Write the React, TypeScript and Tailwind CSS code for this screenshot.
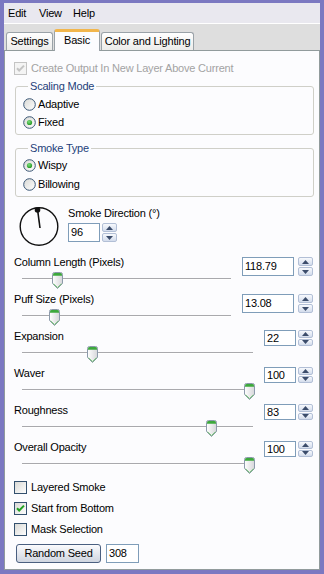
import React from 'react';

const font = { fontFamily: '"Liberation Sans", Arial, sans-serif' };

interface SliderRow {
    label: string;
    value: string;
    wide?: boolean;
    thumb: string;
}

const sliders: SliderRow[] = [
    { label: 'Column Length (Pixels)', value: '118.79', wide: true, thumb: 'left-[30px]' },
    { label: 'Puff Size (Pixels)', value: '13.08', wide: true, thumb: 'left-[27px]' },
    { label: 'Expansion', value: '22', thumb: 'left-[65px]' },
    { label: 'Waver', value: '100', thumb: 'left-[222px]' },
    { label: 'Roughness', value: '83', thumb: 'left-[184px]' },
    { label: 'Overall Opacity', value: '100', thumb: 'left-[222px]' },
];

const CheckBox: React.FC<{ checked?: boolean; disabled?: boolean }> = ({ checked, disabled }) => (
    <svg width="13" height="13" viewBox="0 0 13 13" className="shrink-0">
        <defs>
            <linearGradient id="cbg" x1="0" y1="0" x2="1" y2="1">
                <stop offset="0" stopColor="#d8d8d4" />
                <stop offset="1" stopColor="#ffffff" />
            </linearGradient>
        </defs>
        <rect x="0.5" y="0.5" width="12" height="12" fill={disabled ? '#f4f4f4' : 'url(#cbg)'} stroke={disabled ? '#c4c4c4' : '#33506e'} />
        {checked && (
            <path d="M3 6.2 L5.2 8.5 L10 3.6" fill="none" stroke={disabled ? '#c4c4c4' : '#21a121'} strokeWidth="2" />
        )}
    </svg>
);

const Radio: React.FC<{ checked?: boolean }> = ({ checked }) => (
    <svg width="13" height="13" viewBox="0 0 13 13" className="shrink-0">
        <defs>
            <linearGradient id="rbg" x1="0" y1="0" x2="1" y2="1">
                <stop offset="0" stopColor="#d8d8d4" />
                <stop offset="1" stopColor="#ffffff" />
            </linearGradient>
            <radialGradient id="rdot" cx="0.4" cy="0.35" r="0.7">
                <stop offset="0" stopColor="#7be07b" />
                <stop offset="1" stopColor="#1f921f" />
            </radialGradient>
        </defs>
        <circle cx="6.5" cy="6.5" r="5.8" fill="url(#rbg)" stroke="#3a5675" />
        {checked && <circle cx="6.5" cy="6.5" r="2.6" fill="url(#rdot)" />}
    </svg>
);

const Spinner: React.FC = () => (
    <div className="flex h-full w-[15px] flex-col gap-px">
        {[0, 1].map((i) => (
            <div key={i} className="flex flex-1 items-center justify-center rounded-[2px] border border-[#b2bfd6] bg-linear-to-b from-[#f7f9fd] to-[#d3dcec]">
                <svg width="7" height="4" viewBox="0 0 7 4">
                    <path d={i === 0 ? 'M0 4 L3.5 0 L7 4 Z' : 'M0 0 L3.5 4 L7 0 Z'} fill="#3b4c6b" />
                </svg>
            </div>
        ))}
    </div>
);

const Thumb: React.FC = () => (
    <svg width="11" height="17" viewBox="0 0 11 17">
        <defs>
            <linearGradient id="thb" x1="0" y1="0" x2="1" y2="0">
                <stop offset="0" stopColor="#ffffff" />
                <stop offset="1" stopColor="#d6d6da" />
            </linearGradient>
        </defs>
        <path d="M0.5 2.5 Q0.5 0.5 2.5 0.5 H8.5 Q10.5 0.5 10.5 2.5 V11.5 L5.5 16.5 L0.5 11.5 Z" fill="url(#thb)" stroke="#8c9aab" />
        <path d="M1 2.5 Q1 1 2.5 1 H8.5 Q10 1 10 2.5 V3.8 H1 Z" fill="#3da83d" />
        <path d="M1.5 11.8 L5.5 15.6 L9.5 11.8" fill="none" stroke="#6cbf6c" />
    </svg>
);

const NumberBox: React.FC<{ value: string; className: string }> = ({ value, className }) => (
    <div className={`flex items-center border border-[#7f9db9] bg-white pl-[2px] text-[11px] leading-none ${className}`}>{value}</div>
);

const App: React.FC = () => {
    return (
        <div style={font} className="h-[574px] w-[324px] overflow-hidden bg-[#7b78c1] pb-[4px] pl-[4px] pr-[4px] pt-[3px] text-[11px] tracking-[-0.2px] text-black">
            <div className="flex h-full flex-col bg-[#dedede]">
                {/* menu */}
                <div className="flex h-[20px] items-center bg-[#e9e8ef] pl-[4px]">
                    <span className="w-[31px]">Edit</span>
                    <span className="w-[34px]">View</span>
                    <span>Help</span>
                </div>
                <div className="h-px bg-white" />

                {/* tabs */}
                <div className="flex h-[26px] items-end pl-[2px]">
                    <div className="flex h-[18px] w-[47px] items-center justify-center rounded-t-[3px] border border-b-0 border-[#9aa2a8] bg-linear-to-b from-white to-[#ececea]">Settings</div>
                    <div className="relative z-10 mb-[-1px] ml-px flex h-[22px] w-[46px] items-center justify-center rounded-t-[3px] border-x border-t-[3px] border-x-[#9aa2a8] border-t-[#f2b64c] bg-[#fcfcfe] pb-[2px]">Basic</div>
                    <div className="ml-px flex h-[18px] w-[93px] items-center justify-center rounded-t-[3px] border border-b-0 border-[#9aa2a8] bg-linear-to-b from-white to-[#ececea]">Color and Lighting</div>
                </div>

                {/* panel */}
                <div className="flex flex-1 flex-col border border-[#919b9c] bg-[#fcfcfe] pl-[9px] pr-[5px]">
                    <div className="mt-[9px] flex h-[16px] items-center gap-[4px] text-[#a3a3a3]">
                        <CheckBox checked disabled />
                        <span>Create Output In New Layer Above Current</span>
                    </div>

                    <fieldset className="ml-px mt-[3px] rounded-[3px] border border-[#cfcfc8] pb-[3px] pl-[7px] pt-[2px]">
                        <legend className="ml-[5px] px-[2px] leading-[14px] text-[#1e3f7a]">Scaling Mode</legend>
                        <div className="flex h-[18px] items-center gap-[2px]"><Radio /><span>Adaptive</span></div>
                        <div className="flex h-[18px] items-center gap-[2px]"><Radio checked /><span>Fixed</span></div>
                    </fieldset>

                    <fieldset className="ml-px mt-[6px] rounded-[3px] border border-[#cfcfc8] pb-[2px] pl-[7px] pt-[1px]">
                        <legend className="ml-[5px] px-[2px] leading-[14px] text-[#1e3f7a]">Smoke Type</legend>
                        <div className="flex h-[19px] items-center gap-[2px]"><Radio checked /><span>Wispy</span></div>
                        <div className="flex h-[19px] items-center gap-[2px]"><Radio /><span>Billowing</span></div>
                    </fieldset>

                    {/* direction dial */}
                    <div className="mt-[9px] flex h-[41px]">
                        <svg width="41" height="41" viewBox="0 0 41 41" className="ml-[5px]">
                            <circle cx="20" cy="20.5" r="18.8" fill="none" stroke="#111" strokeWidth="1.4" />
                            <line x1="21" y1="22" x2="18.6" y2="4" stroke="#111" strokeWidth="1.6" />
                            <circle cx="18.5" cy="4" r="2.8" fill="#111" />
                        </svg>
                        <div className="ml-[8px] flex flex-col">
                            <span className="h-[14px] leading-[14px]">Smoke Direction (°)</span>
                            <div className="mt-[3px] flex h-[19px] gap-[2px]">
                                <NumberBox value="96" className="h-[19px] w-[32px]" />
                                <Spinner />
                            </div>
                        </div>
                    </div>

                    {/* sliders */}
                    <div className="mt-[8px] flex flex-col">
                        {sliders.map((s) => (
                            <div key={s.label} className="flex h-[37px] pr-px">
                                <div className="flex flex-1 flex-col">
                                    <span className="h-[14px] leading-[14px]">{s.label}</span>
                                    <div className="relative ml-[8px] mr-[11px] mt-[9px] h-[2px] border-b border-t border-b-white border-t-[#a9a9ad]">
                                        <div className={`absolute top-[-7px] ${s.thumb}`}>
                                            <Thumb />
                                        </div>
                                    </div>
                                </div>
                                {s.wide ? (
                                    <div className="mt-[2px] flex h-[19px] gap-[4px]">
                                        <NumberBox value={s.value} className="h-[19px] w-[52px]" />
                                        <Spinner />
                                    </div>
                                ) : (
                                    <div className="mt-px flex h-[16px] gap-[2px]">
                                        <NumberBox value={s.value} className="h-[16px] w-[32px]" />
                                        <Spinner />
                                    </div>
                                )}
                            </div>
                        ))}
                    </div>

                    {[
                        { label: 'Layered Smoke', checked: false },
                        { label: 'Start from Bottom', checked: true },
                        { label: 'Mask Selection', checked: false },
                    ].map((c) => (
                        <div key={c.label} className="flex h-[21px] items-center gap-[4px]">
                            <CheckBox checked={c.checked} />
                            <span>{c.label}</span>
                        </div>
                    ))}

                    <div className="ml-[2px] mt-[4px] flex items-center">
                        <button className="h-[19px] w-[85px] rounded-[3px] border border-[#4a5f80] bg-linear-to-b from-[#fbfbfd] to-[#cfd5e0] text-[11px]">Random Seed</button>
                        <NumberBox value="308" className="ml-[5px] h-[19px] w-[33px]" />
                    </div>
                </div>
            </div>
        </div>
    );
};

export default App;
